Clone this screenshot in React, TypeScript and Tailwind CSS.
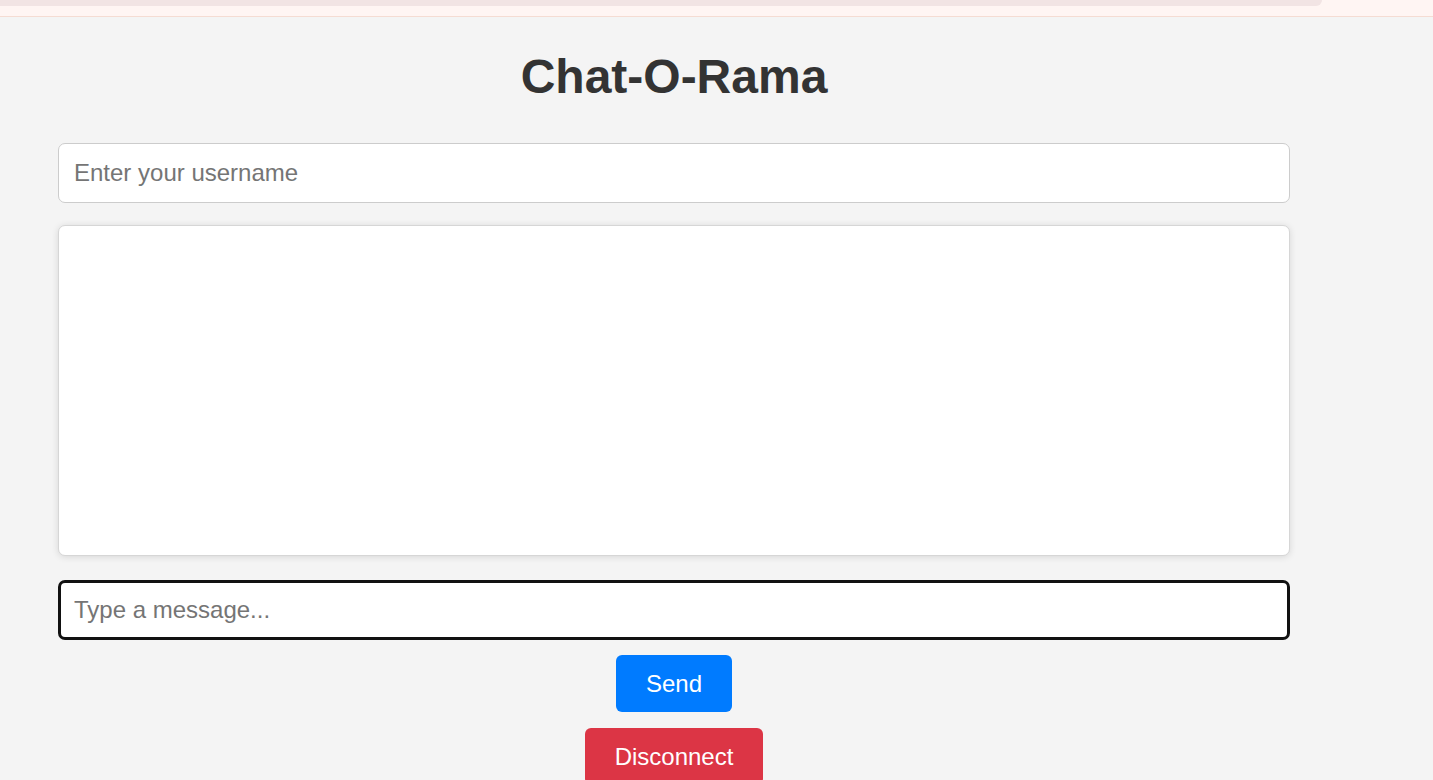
import { useState } from "react";

export default function App() {
  const [username, setUsername] = useState("");
  const [message, setMessage] = useState("");

  return (
    <div className="min-h-[780px] bg-[#f4f4f4] font-['Liberation_Sans',Arial,sans-serif]">
      {/* browser-ish strip on top */}
      <div className="h-[17px] bg-[#fff5f3] border-b border-[#f5dcd3]">
        <div className="h-[6px] w-[1322px] bg-[#f2e4e4] rounded-br-[8px]" />
      </div>

      <div className="ml-[58px] w-[1232px] flex flex-col">
        <h1 className="mt-[33px] mb-[39px] text-center text-[48px] leading-[54px] font-bold text-[#333]">
          Chat-O-Rama
        </h1>

        <input
          value={username}
          onChange={(e) => setUsername(e.target.value)}
          placeholder="Enter your username"
          className="h-[60px] px-[15px] bg-white border border-[#cccccc] rounded-[7px] text-[24px] text-[#333] placeholder:text-[#757575] outline-none"
        />

        {/* messages */}
        <div className="mt-[22px] h-[331px] bg-white border border-[#d6d6d6] rounded-[7px] shadow-[0_1px_7px_rgba(0,0,0,0.12)]" />

        <input
          value={message}
          onChange={(e) => setMessage(e.target.value)}
          placeholder="Type a message..."
          className="mt-[24px] h-[60px] px-[13px] bg-white border-[3px] border-[#111] rounded-[7px] text-[24px] text-[#333] placeholder:text-[#757575] outline-none"
        />

        <div className="flex flex-col items-center">
          <button className="mt-[15px] h-[57px] px-[30px] bg-[#007bff] text-white text-[24px] rounded-[6px]">
            Send
          </button>
          <button className="mt-[16px] h-[57px] px-[30px] bg-[#dc3545] text-white text-[24px] rounded-[6px]">
            Disconnect
          </button>
        </div>
      </div>
    </div>
  );
}
